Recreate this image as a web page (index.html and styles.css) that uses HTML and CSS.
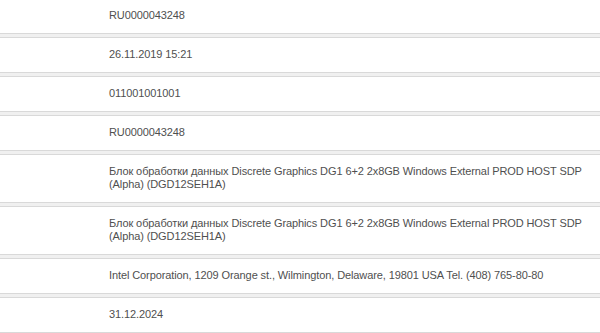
FILE: index.html
```html
<!DOCTYPE html>
<html lang="ru">
<head>
<meta charset="utf-8">
<link rel="stylesheet" href="styles.css">
</head>
<body>
<div class="list">
  <div class="row"><div class="val">RU0000043248</div></div>
  <div class="row"><div class="val">26.11.2019 15:21</div></div>
  <div class="row"><div class="val">011001001001</div></div>
  <div class="row"><div class="val">RU0000043248</div></div>
  <div class="row"><div class="val">Блок обработки данных Discrete Graphics DG1 6+2 2x8GB Windows External PROD HOST SDP (Alpha) (DGD12SEH1A)</div></div>
  <div class="row"><div class="val">Блок обработки данных Discrete Graphics DG1 6+2 2x8GB Windows External PROD HOST SDP (Alpha) (DGD12SEH1A)</div></div>
  <div class="row"><div class="val">Intel Corporation, 1209 Orange st., Wilmington, Delaware, 19801 USA Tel. (408) 765-80-80</div></div>
  <div class="row"><div class="val">31.12.2024</div></div>
</div>
</body>
</html>
```
FILE: styles.css
```css
html, body {
  margin: 0;
  padding: 0;
  background: #f0f0f0;
}
body {
  width: 600px;
  height: 333px;
  overflow: hidden;
  font-family: "Liberation Sans", Arial, sans-serif;
  font-size: 11px;
  line-height: 13px;
  letter-spacing: -0.1px;
  color: #4f4f4f;
}
.list {
  display: flex;
  flex-direction: column;
  gap: 3px;
  margin-top: -2px;
}
.row {
  background: #fff;
  border-top: 1px solid #d9d9d9;
  border-bottom: 1px solid #d9d9d9;
  padding: 10px 16px 11px 109px;
}
.val {
  max-width: 475px;
}
```
